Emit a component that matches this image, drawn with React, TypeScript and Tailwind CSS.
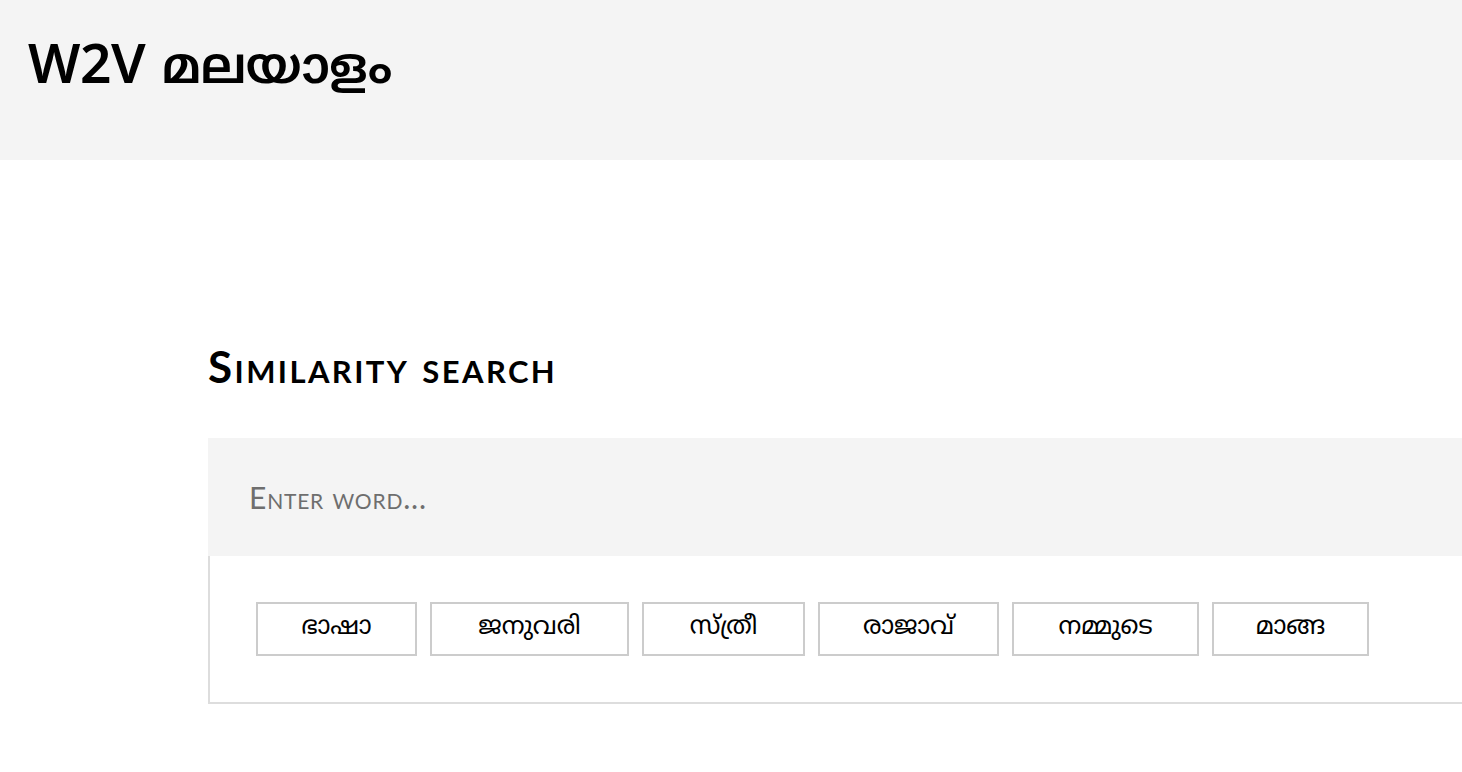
const words = ["ഭാഷാ", "ജനുവരി", "സ്ത്രീ", "രാജാവ്", "നമ്മുടെ", "മാങ്ങ"];

const widths = ["w-[161px]", "w-[199px]", "w-[163px]", "w-[181px]", "w-[187px]", "w-[157px]"];

const mal = { fontFamily: '"Noto Sans Malayalam", "Noto Sans", "DejaVu Sans", sans-serif' };
const sc = { fontFamily: 'Lato, "Open Sans", sans-serif', fontVariant: "small-caps" as const };

export default function App() {
  return (
    <div className="min-h-screen w-full overflow-hidden bg-white text-black">
      <header className="h-[160px] bg-[#f4f4f4] px-[28px] pt-[34px]">
        <h1 className="text-[55px] leading-[72px] font-semibold tracking-[-0.5px]" style={mal}>
          W2V <span className="text-[51px] tracking-[-1px]">മലയാളം</span>
        </h1>
      </header>

      <main className="ml-[208px] w-[1400px] pt-[176px]">
        <h2 className="text-[44px] leading-[60px] font-bold tracking-[2.4px]" style={sc}>
          Similarity search
        </h2>

        <div className="mt-[42px] h-[118px] bg-[#f4f4f4] flex items-center px-[41px]">
          <input
            placeholder="Enter word..."
            className="w-full bg-transparent text-[30px] tracking-[0.8px] text-black outline-none placeholder:text-[#6e6e6e]"
            style={sc}
          />
        </div>

        <div className="h-[148px] border-l-2 border-b-2 border-[#dddddd] flex items-center gap-[13px] pl-[46px]">
          {words.map((w, i) => (
            <button
              key={w}
              className={`${widths[i]} h-[54px] border-2 border-[#cccccc] bg-white text-[25px] font-normal flex items-center justify-center`}
              style={mal}
            >
              {w}
            </button>
          ))}
        </div>
      </main>
    </div>
  );
}
